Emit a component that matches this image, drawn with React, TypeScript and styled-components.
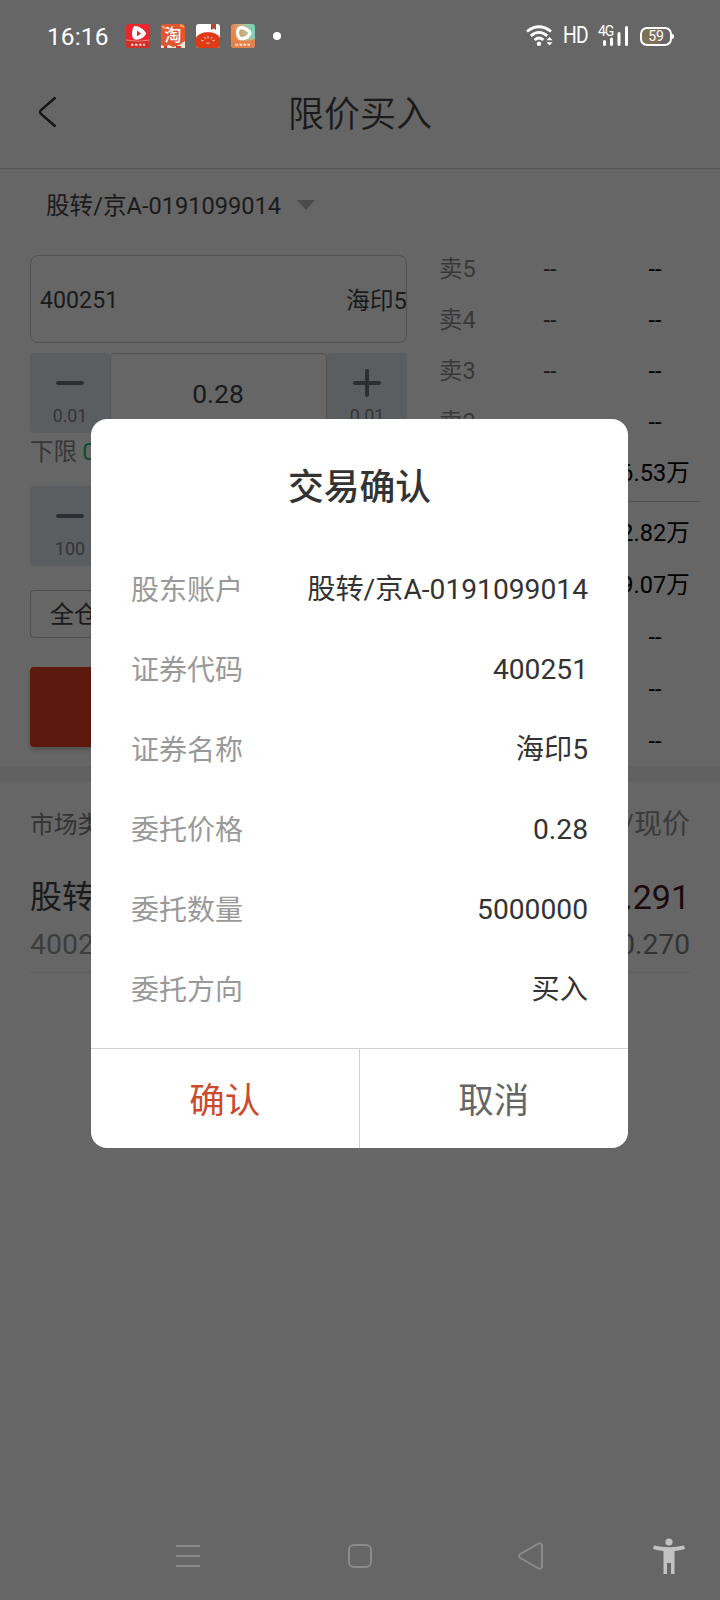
import React from "react";
import styled, { createGlobalStyle } from "styled-components";

const GlobalStyle = createGlobalStyle`
  * { box-sizing: border-box; }
  body { margin: 0; background: #666666; }
`;

const Screen = styled.div`
  position: relative;
  width: 720px;
  height: 1600px;
  display: flex;
  flex-direction: column;
  overflow: hidden;
  background: #666666;
  color: #1a1a1a;
  font-family: Roboto, "Noto Sans CJK SC", sans-serif;
  line-height: 1.2;
  white-space: nowrap;
`;

/* Status bar */
const StatusBar = styled.div`
  height: 72px;
  padding: 0 48px 0 47px;
  display: flex;
  align-items: center;
  justify-content: space-between;
  color: #fff;
`;
const StatusGroup = styled.div<{ $gap: number }>`
  display: flex;
  align-items: center;
  gap: ${(p) => p.$gap}px;
  svg { overflow: visible; }
`;
const Clock = styled.span`
  width: 68px;
  padding-top: 1px;
  font-size: 24.5px;
  line-height: 30px;
  letter-spacing: 0.1px;
`;
const Dot = styled.span`
  width: 8px;
  height: 8px;
  margin-left: 7px;
  border-radius: 50%;
  background: #fff;
`;
const HdLabel = styled.span`
  margin-left: -1px;
  font-size: 23px;
  line-height: 26px;
  letter-spacing: -1px;
  transform: scaleX(0.84);
  transform-origin: left center;
  width: 25px;
`;
const Signal = styled.div`
  position: relative;
  width: 30px;
  height: 22px;
`;
const SignalType = styled.span`
  position: absolute;
  left: -1px;
  top: 1px;
  font-size: 14px;
  line-height: 11px;
  letter-spacing: -1.2px;
`;
const Battery = styled.div`
  position: relative;
  width: 32px;
  height: 19px;
  border: 2px solid #fff;
  border-radius: 7px;
  background: linear-gradient(90deg, #7d7257 59%, #666666 59%);
  font-size: 14px;
  line-height: 15px;
  text-align: center;
  &::after {
    content: "";
    position: absolute;
    right: -4px;
    top: 5px;
    width: 2px;
    height: 5px;
    border-radius: 0 2px 2px 0;
    background: #fff;
  }
`;

/* Title bar */
const TitleBar = styled.header`
  height: 97px;
  padding: 0 39px 16px;
  display: grid;
  grid-template-columns: 60px 1fr 60px;
  align-items: center;
  border-bottom: 1px solid #505050;
`;
const Title = styled.h1`
  margin: 0;
  padding-top: 5px;
  font-size: 36px;
  line-height: 44px;
  font-weight: 350;
  text-align: center;
`;
const AccountRow = styled.div`
  height: 74px;
  padding: 0 0 2px 46px;
  display: flex;
  align-items: center;
  gap: 16px;
  font-size: 23.6px;
  span { padding-top: 2px; }
`;

/* Order form */
const Trade = styled.main`
  height: 523px;
  display: flex;
  gap: 32px;
  padding-left: 30px;
`;
const Form = styled.section`
  width: 377px;
  padding-top: 12px;
`;
const CodeField = styled.div`
  height: 88px;
  padding: 4px 0 0 9px;
  border: 1px solid #525252;
  border-radius: 8px;
  display: flex;
  align-items: center;
  justify-content: space-between;
  overflow: hidden;
  font-size: 23.2px;
`;
const StockName = styled.span`
  margin-right: -1px;
  font-size: 23.8px;
`;
const Stepper = styled.div<{ $top: number }>`
  height: 80px;
  margin-top: ${(p) => p.$top}px;
  display: grid;
  grid-template-columns: 80px 1fr 80px;
`;
const StepButton = styled.div`
  display: flex;
  flex-direction: column;
  align-items: center;
  padding-top: 15px;
  gap: 7px;
  border-radius: 4px;
  background: #5b5e61;
  color: #333435;
  font-size: 17.8px;
  line-height: 22px;
  svg { display: block; }
`;
const StepValue = styled.div`
  display: flex;
  align-items: center;
  justify-content: center;
  padding: 2px 1px 0 0;
  border: 1px solid #525252;
  border-radius: 4px;
  font-size: 26.5px;
`;
const LimitRow = styled.div`
  height: 36px;
  padding-top: 2px;
  display: flex;
  align-items: center;
  gap: 5px;
  font-size: 23.6px;
  color: #363636;
`;
const LimitPrice = styled.span`
  color: #0b4b2b;
`;
const PositionButton = styled.div`
  width: 88px;
  height: 48px;
  margin-top: 24px;
  padding-top: 2px;
  border: 1px solid #4d4d4d;
  border-radius: 4px;
  display: flex;
  align-items: center;
  justify-content: center;
  font-size: 24px;
`;
const BuyButton = styled.div`
  height: 80px;
  margin-top: 29px;
  border-radius: 4px;
  background: #5c1a0e;
  box-shadow: 0 3px 4px rgba(0, 0, 0, 0.2);
`;

/* Order book */
const Book = styled.section`
  width: 269px;
`;
const Quotes = styled.div<{ $row: number }>`
  display: grid;
  grid-auto-rows: ${(p) => p.$row}px;
`;
const Quote = styled.div`
  display: grid;
  grid-template-columns: 58px 106px 105px;
  align-items: center;
  padding-top: 2px;
  text-align: center;
  font-size: 23.5px;
`;
const QuoteLabel = styled.span`
  text-align: left;
  color: #383838;
`;
const QuoteVolume = styled.span`
  padding-right: 1px;
  color: #000;
`;
const BookRule = styled.div`
  width: 261px;
  height: 1px;
  margin: 3px 0 4px;
  background: #4f4f4f;
`;

/* Holdings */
const Band = styled.div`
  height: 16px;
  background: #616161;
`;
const Holdings = styled.section`
  margin: 0 30px;
  height: 191px;
  border-bottom: 1px solid #5c5c5c;
`;
const HoldingRow = styled.div<{ $height: number }>`
  height: ${(p) => p.$height}px;
  display: flex;
  align-items: center;
  justify-content: space-between;
`;
const Cell = styled.span<{ $size: number; $color: string }>`
  font-size: ${(p) => p.$size}px;
  line-height: 40px;
  color: ${(p) => p.$color};
`;

/* Confirmation dialog */
const Dialog = styled.div`
  position: absolute;
  left: 91px;
  top: 419px;
  width: 537px;
  height: 729px;
  display: flex;
  flex-direction: column;
  border-radius: 16px;
  overflow: hidden;
  background: #fff;
  color: #333;
`;
const DialogTitle = styled.h2`
  margin: 0;
  height: 130px;
  line-height: 138px;
  text-align: center;
  font-size: 35.8px;
  font-weight: 500;
`;
const Details = styled.div`
  height: 499px;
  padding: 0 40px;
`;
const Detail = styled.div`
  height: 80px;
  padding-top: 2px;
  display: flex;
  align-items: center;
  justify-content: space-between;
  font-size: 28px;
`;
const DetailLabel = styled.span`
  padding-top: 1px;
  color: #999;
`;
const DetailValue = styled.span`
  font-size: 28.2px;
`;
const Actions = styled.div`
  flex: 1;
  display: grid;
  grid-template-columns: 1fr 1fr;
  border-top: 1px solid #d2d2d2;
`;
const Action = styled.button<{ $color: string; $divided?: boolean }>`
  border: 0;
  border-right: ${(p) => (p.$divided ? "1px solid #d2d2d2" : "0")};
  padding: 4px 0 0;
  background: none;
  color: ${(p) => p.$color};
  font-family: inherit;
  font-size: 35.5px;
  line-height: 44px;
`;

/* System navigation */
const NavBar = styled.nav`
  height: 88px;
  margin-top: auto;
  padding-left: 176px;
  display: grid;
  grid-template-columns: 172px 170px 135px 32px;
  align-items: center;
  svg { display: block; }
`;

const sells = [["卖5", "--", "--"], ["卖4", "--", "--"], ["卖3", "--", "--"], ["卖2", "", "--"], ["", "", "6.53万"]];
const buys = [["", "", "2.82万"], ["", "", "9.07万"], ["", "", "--"], ["", "", "--"], ["", "", "--"]];
const details = [
  ["股东账户", "股转/京A-0191099014"],
  ["证券代码", "400251"],
  ["证券名称", "海印5"],
  ["委托价格", "0.28"],
  ["委托数量", "5000000"],
  ["委托方向", "买入"],
];

const StepIcon = ({ plus }: { plus?: boolean }) => (
  <svg width="30" height="30" viewBox="0 0 30 30" stroke="#2b2e33" strokeWidth="4" strokeLinecap="round">
    <path d="M3 15H27" />
    {plus && <path d="M15 3V27" />}
  </svg>
);

const QuoteList = ({ rows, height }: { rows: string[][]; height: number }) => (
  <Quotes $row={height}>
    {rows.map(([label, price, volume], i) => (
      <Quote key={i}>
        <QuoteLabel>{label}</QuoteLabel>
        <span>{price}</span>
        <QuoteVolume>{volume}</QuoteVolume>
      </Quote>
    ))}
  </Quotes>
);

const VideoIcon = () => (
  <svg width="24" height="24" viewBox="0 0 24 24">
    <rect width="24" height="24" rx="3" fill="#e9262f" />
    <path d="M0 16Q12 18 24 16V21a3 3 0 0 1-3 3H3a3 3 0 0 1-3-3Z" fill="#cf3028" />
    <path d="M7.500 3C9 -0.500 20 6 20 9.500C19 14 11 17 8 15C5.500 13.500 5.500 7 7.500 3Z" fill="#fff" />
    <path d="M11 6.500L15 9.500L11 12.500Z" fill="#d92830" />
    <path d="M0 16Q12 18.500 24 16" stroke="#ef8378" fill="none" />
    <path d="M5 20.800H19" stroke="#ffdcd8" strokeWidth="2" strokeDasharray="2.500 1.500" />
  </svg>
);
const ShopIcon = () => (
  <svg width="24" height="24" viewBox="0 0 24 24">
    <rect width="24" height="24" rx="3" fill="#df5630" />
    <path d="M0 21L4 22.500L8 21L12 23L18 21L24 17V24H0Z" fill="#f1e6d2" />
    <path d="M3 23h3M15 23h5" stroke="#ca3b32" strokeWidth="2" />
    <path d="M1 2l4 3M19 1l4 2" stroke="#f2a45b" strokeWidth="2" />
    <text x="12" y="17" fontSize="17" fontWeight="500" textAnchor="middle" fill="#fff" fontFamily="Noto Sans CJK SC">淘</text>
  </svg>
);
const TomatoIcon = () => (
  <svg width="24" height="24" viewBox="0 0 24 24">
    <rect width="24" height="24" rx="3" fill="#fff" />
    <path d="M15 0H20V6L17.500 4.500L15 6Z" fill="#b5482f" />
    <path d="M0 14C3 7 20 6 24 14V21a3 3 0 0 1-3 3H3a3 3 0 0 1-3-3Z" fill="#dc3b16" />
    <path d="M5 16l2.500 1M8.500 13l1 2M12 12v2.500M16 13l-1 2M19 16l-2.500 1M10.500 19q1.500 1 3 0" stroke="#ffd9c4" strokeWidth="1" fill="none" />
  </svg>
);
const PlayIcon = () => (
  <svg width="24" height="24" viewBox="0 0 24 24">
    <defs>
      <linearGradient id="play" x1="0" y1="0.500" x2="1" y2="0.200">
        <stop offset="0.150" stopColor="#ee8548" />
        <stop offset="0.600" stopColor="#b5bd94" />
        <stop offset="1" stopColor="#6ed6bd" />
      </linearGradient>
    </defs>
    <rect width="24" height="24" rx="3" fill="url(#play)" />
    <path d="M0 15Q12 19 24 15V21a3 3 0 0 1-3 3H3a3 3 0 0 1-3-3Z" fill="#e6804b" />
    <path d="M8 4.500C11 2 18 6 19 9C18 13 12 16 8.500 14C6 12 6 6 8 4.500Z" fill="none" stroke="#fff" strokeWidth="3.200" />
    <path d="M4.500 20.800H19.500" stroke="#ffe9d8" strokeWidth="2" strokeDasharray="2.500 1.500" />
  </svg>
);

export default function App() {
  return (
    <Screen>
      <GlobalStyle />
      <StatusBar>
        <StatusGroup $gap={11}>
          <Clock>16:16</Clock>
          <VideoIcon />
          <ShopIcon />
          <TomatoIcon />
          <PlayIcon />
          <Dot />
        </StatusGroup>
        <StatusGroup $gap={11}>
          <svg width="27" height="22" viewBox="0 0 27 22" fill="none" stroke="#fff" strokeWidth="2.800">
            <path d="M1 6.500Q13 -3 25 6.500" />
            <path d="M4.800 10.800Q13 4 21.200 10.800" />
            <path d="M8.600 15Q13 11 17.400 15" />
            <circle cx="13" cy="18.800" r="2.200" fill="#fff" stroke="none" />
            <path d="M20.500 15.300L23.500 12L26.500 15.300ZM20.500 17.300L23.500 20.600L26.500 17.300Z" fill="#fff" stroke="none" />
          </svg>
          <HdLabel>HD</HdLabel>
          <Signal>
            <svg width="30" height="22" viewBox="0 0 30 22" stroke="#fff" strokeWidth="3" strokeLinecap="round">
              <path d="M5.500 16.500V19.500M12.500 14V19.500M20 8.500V19.500M27.500 2.500V19.500" />
            </svg>
            <SignalType>4G</SignalType>
          </Signal>
          <Battery>59</Battery>
        </StatusGroup>
      </StatusBar>

      <TitleBar>
        <svg width="18" height="32" viewBox="0 0 18 32" fill="none" stroke="#141414" strokeWidth="2.400">
          <path d="M16.500 1.500L2 14Q0.200 16 2 18L16.500 30.500" />
        </svg>
        <Title>限价买入</Title>
      </TitleBar>

      <AccountRow>
        <span>股转/京A-0191099014</span>
        <svg width="18" height="10" viewBox="0 0 18 10"><path d="M0 0H18L9 10Z" fill="#4b4b4b" /></svg>
      </AccountRow>

      <Trade>
        <Form>
          <CodeField>
            <span>400251</span>
            <StockName>海印5</StockName>
          </CodeField>
          <Stepper $top={10}>
            <StepButton><StepIcon />0.01</StepButton>
            <StepValue>0.28</StepValue>
            <StepButton><StepIcon plus />0.01</StepButton>
          </Stepper>
          <LimitRow>下限 <LimitPrice>0</LimitPrice></LimitRow>
          <Stepper $top={17}>
            <StepButton><StepIcon />100</StepButton>
          </Stepper>
          <PositionButton>全仓</PositionButton>
          <BuyButton />
        </Form>
        <Book>
          <QuoteList rows={sells} height={51} />
          <BookRule />
          <QuoteList rows={buys} height={52} />
        </Book>
      </Trade>

      <Band />
      <Holdings>
        <HoldingRow $height={85}>
          <Cell $size={23.8} $color="#333">市场类</Cell>
          <Cell $size={28} $color="#3a3a3a">/现价</Cell>
        </HoldingRow>
        <HoldingRow $height={60}>
          <Cell $size={32} $color="#1a1a1a">股转</Cell>
          <Cell $size={34} $color="#190c0e">0.291</Cell>
        </HoldingRow>
        <HoldingRow $height={35}>
          <Cell $size={28.5} $color="#3d3d3d">400251</Cell>
          <Cell $size={28.2} $color="#333">0.270</Cell>
        </HoldingRow>
      </Holdings>

      <NavBar>
        <svg width="24" height="24" viewBox="0 0 24 24" stroke="#898989" strokeWidth="2">
          <path d="M0 2H24M0 12H24M0 22H24" />
        </svg>
        <svg width="24" height="24" viewBox="0 0 24 24" fill="none" stroke="#8b8b8b" strokeWidth="2">
          <rect x="1" y="1" width="22" height="22" rx="5" />
        </svg>
        <svg width="26" height="28" viewBox="0 0 26 28" fill="none" stroke="#8b8b8b" strokeWidth="2">
          <path d="M2 12.200L20.500 1.600Q24 0.500 24 4V24Q24 27.500 20.500 26.400L2 15.800Q0 14 2 12.200Z" />
        </svg>
        <svg width="32" height="38" viewBox="0 0 32 38" fill="#c2c2c2">
          <circle cx="16" cy="5" r="3.600" />
          <path d="M1 8.500Q16 12 31 8.500L32 12Q27 13.500 21.500 14V37H18V26H14V37H10.500V14Q5 13.500 0 12Z" />
        </svg>
      </NavBar>

      <Dialog role="dialog">
        <DialogTitle>交易确认</DialogTitle>
        <Details>
          {details.map(([label, value]) => (
            <Detail key={label}>
              <DetailLabel>{label}</DetailLabel>
              <DetailValue>{value}</DetailValue>
            </Detail>
          ))}
        </Details>
        <Actions>
          <Action $color="#cc4a2e" $divided>确认</Action>
          <Action $color="#666">取消</Action>
        </Actions>
      </Dialog>
    </Screen>
  );
}
